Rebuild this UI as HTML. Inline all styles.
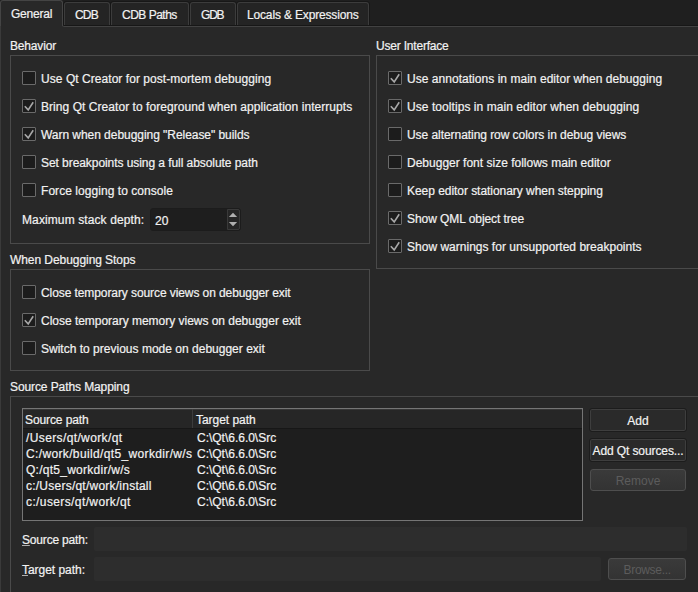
<!DOCTYPE html>
<html><head><meta charset="utf-8">
<style>
*{margin:0;padding:0;box-sizing:border-box}
html,body{width:698px;height:592px;overflow:hidden;background:#282828}
body{position:relative;font-family:"Liberation Sans",sans-serif;font-size:12px;color:#f2f2f2}
.a{position:absolute}
.t{position:absolute;white-space:pre;line-height:14px;height:14px;z-index:5;-webkit-text-stroke:0.2px #f2f2f2}
u{text-decoration:underline;text-underline-offset:1px;text-decoration-color:#b0b0b0}
.tabbar{position:absolute;left:0;top:0;width:698px;height:26px;background:#1f1f1f}
.tab{position:absolute;top:2px;height:24px;background:#242424;border:1px solid #3c3c3c;border-bottom:none;border-radius:3px 3px 0 0;box-shadow:0 0 0 1px #171717}
.tab.sel{top:0;height:26px;background:#282828;border-color:#444;box-shadow:none;z-index:3}
.pane-top{position:absolute;left:66px;top:26px;width:632px;height:1px;background:#424242;z-index:2}
.pane-dk{position:absolute;left:63px;top:25px;width:635px;height:1px;background:#171717;z-index:2}
.pane-left{position:absolute;left:0;top:26px;width:1px;height:566px;background:#3a3a3a}
.grp{position:absolute;border:1px solid #4a4a4a}
.cb{position:absolute;width:14px;height:14px;border:1px solid #6a6a6a;background:#1c1c1c;border-radius:1px}
.cb svg{position:absolute;left:-1px;top:-1px}
.spin{position:absolute;background:#1e1e1e;border:1px solid #1c1c1c;border-radius:3px}
.spinbtn{position:absolute;left:76px;top:0;width:13px;height:21px;background:#262626;border:1px solid #3a3a3a;border-radius:0 2px 2px 0}
.tbl{position:absolute;border:1px solid #757575;background:#1e1e1e}
.thead{position:absolute;left:0;top:0;right:0;height:20px;background:#262626;border-bottom:1px solid #171717;box-shadow:inset 0 1px #363636}
.hsep{position:absolute;left:169px;top:0;width:1px;height:19px;background:#3c3c3c}
.btn{position:absolute;border:1px solid #1c1c1c;border-radius:3px;background:#2a2a2a;box-shadow:inset 0 0 0 1px #3e3e3e;text-align:center;line-height:23px;padding-top:1px;color:#f2f2f2;white-space:pre;-webkit-text-stroke:0.2px #f2f2f2}
.btn.dis{background:linear-gradient(#3a3a3a,#333);box-shadow:none;border-color:#4e4e4e;color:#5c5c5c;line-height:21px;-webkit-text-stroke:0}
.field{position:absolute;background:#2d2d2d;border-radius:2px}
.fillet{position:absolute;left:62px;top:21px;width:5px;height:6px;border-left:1px solid #444;border-bottom:1px solid #424242;border-bottom-left-radius:2px;z-index:4}
</style></head><body>
<div class="tabbar"></div>
<div class="pane-top"></div><div class="pane-left"></div><div class="pane-dk"></div><div class="fillet"></div>
<div class="tab sel" style="left:0px;width:63px"></div>
<div class="tab" style="left:64px;width:46px"></div>
<div class="tab" style="left:111px;width:78px"></div>
<div class="tab" style="left:190px;width:46px"></div>
<div class="tab" style="left:237px;width:132px"></div>
<div class="t" id="tab0" style="left:11px;top:7px;letter-spacing:-0.233px;">General</div>
<div class="t" id="tab1" style="left:75px;top:8px;letter-spacing:-0.800px;">CDB</div>
<div class="t" id="tab2" style="left:122px;top:8px;letter-spacing:-0.500px;">CDB Paths</div>
<div class="t" id="tab3" style="left:201px;top:8px;letter-spacing:-1.200px;">GDB</div>
<div class="t" id="tab4" style="left:247px;top:8px;letter-spacing:-0.158px;">Locals &amp; Expressions</div>
<div class="grp" style="left:10px;top:55px;width:360px;height:189px"></div>
<div class="t" id="g1" style="left:10px;top:39px;letter-spacing:-0.171px;">Behavior</div>
<div class="grp" style="left:376px;top:55px;width:340px;height:214px"></div>
<div class="t" id="g2" style="left:376px;top:39px;letter-spacing:-0.200px;">User Interface</div>
<div class="grp" style="left:10px;top:269px;width:360px;height:102px"></div>
<div class="t" id="g3" style="left:10px;top:253px;letter-spacing:-0.063px;">When Debugging Stops</div>
<div class="grp" style="left:10px;top:396px;width:720px;height:220px"></div>
<div class="t" id="g4" style="left:10px;top:380px;letter-spacing:-0.095px;">Source Paths Mapping</div>
<div class="cb" style="left:22px;top:71px"></div>
<div class="t" id="b0" style="left:41px;top:72px;letter-spacing:0.051px;">Use Qt Creator for post-mortem debugging</div>
<div class="cb" style="left:22px;top:99px"><svg width="14" height="14" viewBox="0 0 14 14"><path d="M2.8 7.2 L6.2 10.9 L11.2 3.3" fill="none" stroke="#a8a8a8" stroke-width="1.6"/></svg></div>
<div class="t" id="b1" style="left:41px;top:100px;letter-spacing:0.053px;">Bring Qt Creator to foreground when application interrupts</div>
<div class="cb" style="left:22px;top:127px"><svg width="14" height="14" viewBox="0 0 14 14"><path d="M2.8 7.2 L6.2 10.9 L11.2 3.3" fill="none" stroke="#a8a8a8" stroke-width="1.6"/></svg></div>
<div class="t" id="b2" style="left:41px;top:128px;letter-spacing:-0.046px;">Warn when debugging "Release" builds</div>
<div class="cb" style="left:22px;top:155px"></div>
<div class="t" id="b3" style="left:41px;top:156px;letter-spacing:-0.063px;">Set breakpoints using a full absolute path</div>
<div class="cb" style="left:22px;top:183px"></div>
<div class="t" id="b4" style="left:41px;top:184px;letter-spacing:0.052px;">Force logging to console</div>
<div class="t" id="msd" style="left:22px;top:213px;letter-spacing:0.105px;">Maximum stack depth:</div>
<div class="spin" style="left:150px;top:208px;width:91px;height:23px"><div class="spinbtn"></div><svg class="a" style="left:77px;top:3px" width="12" height="16" viewBox="0 0 12 16"><path d="M0.9 5 L5 0.8 L9.1 5Z M0.9 10 L5 14.2 L9.1 10Z" fill="#b0b0b0"/></svg></div>
<div class="t" id="sp20" style="left:155px;top:214px;">20</div>
<div class="cb" style="left:388px;top:71px"><svg width="14" height="14" viewBox="0 0 14 14"><path d="M2.8 7.2 L6.2 10.9 L11.2 3.3" fill="none" stroke="#a8a8a8" stroke-width="1.6"/></svg></div>
<div class="t" id="u0" style="left:407px;top:72px;letter-spacing:0.036px;">Use annotations in main editor when debugging</div>
<div class="cb" style="left:388px;top:99px"><svg width="14" height="14" viewBox="0 0 14 14"><path d="M2.8 7.2 L6.2 10.9 L11.2 3.3" fill="none" stroke="#a8a8a8" stroke-width="1.6"/></svg></div>
<div class="t" id="u1" style="left:407px;top:100px;letter-spacing:0.063px;">Use tooltips in main editor when debugging</div>
<div class="cb" style="left:388px;top:127px"></div>
<div class="t" id="u2" style="left:407px;top:128px;letter-spacing:-0.055px;">Use alternating row colors in debug views</div>
<div class="cb" style="left:388px;top:155px"></div>
<div class="t" id="u3" style="left:407px;top:156px;letter-spacing:0.005px;">Debugger font size follows main editor</div>
<div class="cb" style="left:388px;top:183px"></div>
<div class="t" id="u4" style="left:407px;top:184px;letter-spacing:-0.046px;">Keep editor stationary when stepping</div>
<div class="cb" style="left:388px;top:211px"><svg width="14" height="14" viewBox="0 0 14 14"><path d="M2.8 7.2 L6.2 10.9 L11.2 3.3" fill="none" stroke="#a8a8a8" stroke-width="1.6"/></svg></div>
<div class="t" id="u5" style="left:407px;top:212px;letter-spacing:-0.063px;">Show QML object tree</div>
<div class="cb" style="left:388px;top:239px"><svg width="14" height="14" viewBox="0 0 14 14"><path d="M2.8 7.2 L6.2 10.9 L11.2 3.3" fill="none" stroke="#a8a8a8" stroke-width="1.6"/></svg></div>
<div class="t" id="u6" style="left:407px;top:240px;letter-spacing:0.010px;">Show warnings for unsupported breakpoints</div>
<div class="cb" style="left:22px;top:285px"></div>
<div class="t" id="w0" style="left:41px;top:286px;letter-spacing:-0.086px;">Close temporary source views on debugger exit</div>
<div class="cb" style="left:22px;top:313px"><svg width="14" height="14" viewBox="0 0 14 14"><path d="M2.8 7.2 L6.2 10.9 L11.2 3.3" fill="none" stroke="#a8a8a8" stroke-width="1.6"/></svg></div>
<div class="t" id="w1" style="left:41px;top:314px;letter-spacing:-0.023px;">Close temporary memory views on debugger exit</div>
<div class="cb" style="left:22px;top:341px"></div>
<div class="t" id="w2" style="left:41px;top:342px;letter-spacing:0.010px;">Switch to previous mode on debugger exit</div>
<div class="tbl" style="left:22px;top:408px;width:561px;height:113px"><div class="thead"></div><div class="hsep"></div></div>
<div class="t" id="h1" style="left:25px;top:413px;letter-spacing:-0.100px;">Source path</div>
<div class="t" id="h2" style="left:196px;top:413px;letter-spacing:-0.040px;">Target path</div>
<div class="t" id="r0" style="left:26px;top:431px;letter-spacing:0.375px;">/Users/qt/work/qt</div>
<div class="t" id="rt0" style="left:197px;top:431px;letter-spacing:-0.014px;">C:\Qt\6.6.0\Src</div>
<div class="t" id="r1" style="left:26px;top:447px;letter-spacing:0.357px;">C:/work/build/qt5_workdir/w/s</div>
<div class="t" id="rt1" style="left:197px;top:447px;letter-spacing:-0.014px;">C:\Qt\6.6.0\Src</div>
<div class="t" id="r2" style="left:26px;top:463px;letter-spacing:0.259px;">Q:/qt5_workdir/w/s</div>
<div class="t" id="rt2" style="left:197px;top:463px;letter-spacing:-0.014px;">C:\Qt\6.6.0\Src</div>
<div class="t" id="r3" style="left:26px;top:479px;letter-spacing:0.235px;">c:/Users/qt/work/install</div>
<div class="t" id="rt3" style="left:197px;top:479px;letter-spacing:-0.014px;">C:\Qt\6.6.0\Src</div>
<div class="t" id="r4" style="left:26px;top:495px;letter-spacing:0.389px;">c:/users/qt/work/qt</div>
<div class="t" id="rt4" style="left:197px;top:495px;letter-spacing:-0.014px;">C:\Qt\6.6.0\Src</div>
<div class="btn" style="left:589px;top:408px;width:98px;height:24px">Add</div>
<div class="btn" style="left:589px;top:438px;width:98px;height:24px;letter-spacing:-0.1px">Add Qt sources...</div>
<div class="btn dis" style="left:590px;top:469px;width:96px;height:22px">Remove</div>
<div class="t" id="lsp" style="left:22px;top:533px;letter-spacing:-0.182px;"><u>S</u>ource path:</div>
<div class="field" style="left:94px;top:527px;width:593px;height:24px"></div>
<div class="t" id="ltp" style="left:22px;top:563px;letter-spacing:-0.036px;"><u>T</u>arget path:</div>
<div class="field" style="left:94px;top:557px;width:507px;height:24px"></div>
<div class="btn dis" style="left:608px;top:558px;width:78px;height:22px;letter-spacing:-0.3px;text-indent:0.3px">Browse...</div>
</body></html>
